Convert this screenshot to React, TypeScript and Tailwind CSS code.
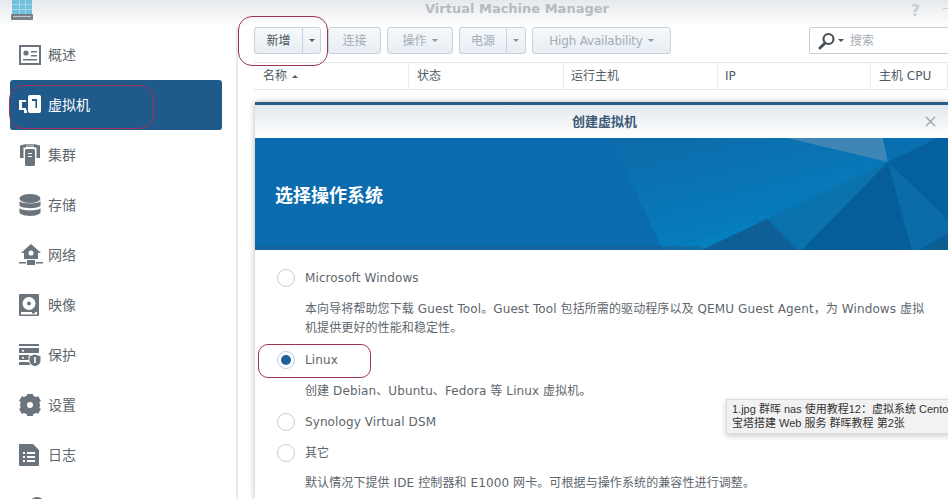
import { X } from "lucide-react";

const font = "font-['DejaVu_Sans','Noto_Sans_CJK_SC',sans-serif]";

const IconProfile = () => (
  <svg width="22" height="20" viewBox="0 0 22 20" fill="none">
    <rect x="1" y="1" width="20" height="18" stroke="#6b747d" strokeWidth="2" />
    <circle cx="7" cy="8" r="2.600" fill="#6b747d" />
    <path d="M12 6h6v1.600h-6zM12 10h6v1.600h-6zM4 14h14v1.600H4z" fill="#6b747d" />
  </svg>
);

const IconVm = () => (
  <svg width="22" height="20" viewBox="0 0 22 20" fill="none">
    <path d="M0 5h7v2H3v6h4v2H0z" fill="#fff" />
    <rect x="5" y="15" width="3" height="3" fill="#fff" />
    <rect x="9" y="0" width="13" height="18" rx="2" fill="#fff" />
    <path d="M13 4h5v9h-1.600V6H13z" fill="#1f5a8b" />
  </svg>
);

const IconCluster = () => (
  <svg width="22" height="22" viewBox="0 0 22 22" fill="none">
    <path d="M1 1.500L7 0v3.500H4.500V14H1zM21 1.500L15 0v3.500h2.500V14H21z" fill="#6b747d" />
    <path d="M7 0h8v3H7z" fill="#9aa1a7" />
    <rect x="6" y="5" width="10" height="17" rx="1.500" fill="#6b747d" />
    <path d="M9 9h4v1H9zM9 12h4v1H9z" fill="#fff" />
  </svg>
);

const IconStorage = () => (
  <svg width="22" height="23" viewBox="0 0 22 23" fill="#6b747d">
    <ellipse cx="11" cy="4.500" rx="10.500" ry="4.500" />
    <path d="M.5 7c1.500 3.200 19.500 3.200 21 0v4.500c-1.500 3.500-19.500 3.500-21 0zM.5 14c1.500 3.200 19.500 3.200 21 0v4.500c-1.500 4.500-19.500 4.500-21 0z" />
  </svg>
);

const IconNetwork = () => (
  <svg width="24" height="22" viewBox="0 0 24 22" fill="#6b747d">
    <path d="M12 0l10 9h-3v6H5V9H2z" />
    <circle cx="12" cy="9" r="2.500" fill="#fff" />
    <rect x="8" y="16" width="8" height="5" />
    <path d="M0 18h7v1.500H0zM17 18h7v1.500h-7z" />
  </svg>
);

const IconImage = () => (
  <svg width="20" height="22" viewBox="0 0 20 22">
    <rect width="20" height="22" rx="1" fill="#6b747d" />
    <circle cx="10" cy="9.500" r="6.500" fill="#fff" />
    <circle cx="10" cy="9.500" r="2" fill="#6b747d" />
    <rect x="2" y="18" width="16" height="2.500" fill="#fff" />
    <rect x="13" y="18" width="3" height="1.500" fill="#6b747d" />
  </svg>
);

const IconProtect = () => (
  <svg width="22" height="22" viewBox="0 0 22 22" fill="#6b747d">
    <path d="M0 0h20v2H0zM0 4h20v5H0zM0 11h11v5H0zM0 18h11v3H0z" />
    <path d="M3 6h2v1.500H3zM3 13h2v1.500H3z" fill="#fff" />
    <path d="M16 10l6 2v5c0 3-3 4.500-6 6-3-1.500-6-3-6-6v-5z" stroke="#fff" strokeWidth="1" />
    <path d="M15.200 13h1.600v6h-1.600z" fill="#fff" />
  </svg>
);

const IconGear = () => (
  <svg width="22" height="22" viewBox="0 0 22 22" fill="none">
    <circle cx="11" cy="11" r="6.500" stroke="#6b747d" strokeWidth="7" />
    <path d="M8 0h6v4H8zM8 18h6v4H8zM0 7l3-5 3.500 2-3 5zM22 7l-3-5-3.500 2 3 5zM0 15l3 5 3.500-2-3-5zM22 15l-3 5-3.500-2 3-5z" fill="#6b747d" />
  </svg>
);

const IconLog = () => (
  <svg width="20" height="22" viewBox="0 0 20 22">
    <path d="M0 1a1 1 0 011-1h13l6 6v15a1 1 0 01-1 1H1a1 1 0 01-1-1z" fill="#6b747d" />
    <path d="M4 8h2v2H4zM8 8h8v2H8zM4 12h2v2H4zM8 12h8v2H8zM4 16h2v2H4zM8 16h8v2H8z" fill="#fff" />
  </svg>
);

const IconLogo = () => (
  <svg width="22" height="21" viewBox="0 0 22 21">
    <rect x="1" y="0" width="20" height="14" fill="#6fc0dc" />
    <path d="M1 4h20v1H1zM1 9h20v1H1zM8 0h1v14H8zM14 0h1v14h-1z" fill="#a4d8e8" />
    <rect y="14" width="22" height="6" rx="1" fill="#7a8288" />
    <rect x="2" y="16" width="18" height="1" fill="#c2c7ca" />
  </svg>
);

const navItems = [
  { label: "概述", icon: <IconProfile /> },
  { label: "虚拟机", icon: <IconVm />, active: true },
  { label: "集群", icon: <IconCluster /> },
  { label: "存储", icon: <IconStorage /> },
  { label: "网络", icon: <IconNetwork /> },
  { label: "映像", icon: <IconImage /> },
  { label: "保护", icon: <IconProtect /> },
  { label: "设置", icon: <IconGear /> },
  { label: "日志", icon: <IconLog /> },
];

const Caret = ({ className = "border-t-[#8a949c]" }: { className?: string }) => (
  <span className={`inline-block w-0 h-0 border-x-[3px] border-x-transparent border-t-[3px] ${className}`} />
);

const btn =
  "h-[27px] shrink-0 flex items-center justify-center rounded-[3px] border border-[#c6d2dc] bg-gradient-to-b from-[#f6f9fb] to-[#e6edf3] text-[12px]";

const Radio = ({ checked = false }: { checked?: boolean }) => (
  <span className={`w-[18px] h-[18px] rounded-full border bg-white flex items-center justify-center shrink-0 ${checked ? "border-[#b9cfe3]" : "border-[#c5cdd3]"}`}>
    {checked && <span className="w-[10px] h-[10px] rounded-full bg-[#1f5f9c]" />}
  </span>
);

const columns = [
  { label: "名称", w: "w-[155px]", pad: "pl-[9px]", sort: true },
  { label: "状态", w: "w-[155px]", pad: "pl-[8px]" },
  { label: "运行主机", w: "w-[154px]", pad: "pl-[7px]" },
  { label: "IP", w: "w-[153px]", pad: "pl-[7px]" },
  { label: "主机 CPU", w: "flex-1", pad: "pl-[8px]" },
];

const App = () => {
  return (
    <div className={`relative w-[948px] h-[499px] overflow-hidden bg-white flex flex-col ${font}`}>
      <div className="h-[27px] shrink-0 relative bg-gradient-to-b from-[#e6e9ec] to-white flex items-center justify-center pl-[86px]">
        <span className="absolute left-[11px] top-0"><IconLogo /></span>
        <span className="text-[13px] font-bold text-[#b5bbc0] -mt-[9px]">Virtual Machine Manager</span>
        <span className="absolute left-[911px] top-0 text-[15px] font-bold text-[#c9ced2]">?</span>
        <span className="absolute left-[943px] top-[8px] w-[5px] h-[1px] bg-[#c9ced2]" />
      </div>

      <div className="flex-1 flex min-h-0">
        <aside className="w-[238px] shrink-0 border-r-2 border-[#e8eaec] pl-[10px] pr-[14px] pt-[3px] flex flex-col">
          {navItems.map((item) => (
            <div
              key={item.label}
              className={`h-[50px] shrink-0 flex items-center rounded-[3px] ${
                item.active ? "bg-[#1f5a8b] text-white" : "text-[#5d666d]"
              }`}
            >
              <span className="w-[38px] pl-[9px] flex justify-start shrink-0">{item.icon}</span>
              <span className="text-[14px]">{item.label}</span>
            </div>
          ))}
          <div className="h-[50px] shrink-0 pl-[19px] pt-[17px]">
            <span className="block w-[16px] h-[16px] rounded-full border-[3px] border-[#6b747d]" />
          </div>
        </aside>

        <main className="flex-1 min-w-0 flex flex-col pl-[16px]">
          <div className="h-[35px] shrink-0 flex items-start gap-[6px] overflow-hidden">
            <div className="flex shrink-0">
              <div className={`${btn} w-[48px] rounded-r-none border-r-0 text-[#4d565d]`}>新增</div>
              <div className={`${btn} w-[19px] rounded-l-none`}><Caret className="border-t-[#4d565d]" /></div>
            </div>
            <div className={`${btn} w-[53px] ml-[1px] text-[#a3adb5]`}>连接</div>
            <div className={`${btn} w-[66px] gap-[5px] text-[#a3adb5]`}>操作 <Caret /></div>
            <div className="flex shrink-0">
              <div className={`${btn} w-[47px] rounded-r-none border-r-0 text-[#a3adb5]`}>电源</div>
              <div className={`${btn} w-[20px] rounded-l-none`}><Caret /></div>
            </div>
            <div className={`${btn} w-[139px] gap-[5px] text-[#a3adb5] tracking-[-0.2px]`}>High Availability <Caret /></div>
            <div className="ml-[132px] w-[150px] h-[27px] shrink-0 border border-[#c6cdd3] bg-white flex items-center pl-[8px] rounded-[2px]">
              <svg width="18" height="18" viewBox="0 0 18 18" fill="none" className="shrink-0">
                <circle cx="10.500" cy="7" r="5" stroke="#4a5157" strokeWidth="2.200" />
                <path d="M7 11l-5 5" stroke="#4a5157" strokeWidth="3" strokeLinecap="round" />
              </svg>
              <span className="ml-[2px] mr-[6px] flex"><Caret className="border-t-[#4a5157]" /></span>
              <span className="text-[12px] text-[#a3adb5]">搜索</span>
            </div>
          </div>

          <div className="h-[28px] shrink-0 flex border-y border-[#e3e7ea]">
            {columns.map((c) => (
              <div key={c.label} className={`${c.w} ${c.pad} shrink-0 border-r border-[#e8ebee] flex items-center gap-[5px] text-[12px] text-[#4e5a64]`}>
                {c.label}
                {c.sort && <span className="w-0 h-0 border-x-[3px] border-x-transparent border-b-[3px] border-b-[#4e5a64]" />}
              </div>
            ))}
          </div>

          <section className="mt-[12px] ml-[1px] flex-1 min-h-0 border-t-[3px] border-[#2a5d8a] shadow-[0_0_6px_rgba(0,0,0,0.3)] flex flex-col">
            <div className="h-[33px] shrink-0 relative bg-gradient-to-b from-[#e2e8ef] to-white flex items-center justify-center pl-[6px]">
              <span className="text-[13px] font-bold text-[#3c5a76]">创建虚拟机</span>
              <X className="absolute right-[9px] top-[8px] w-[17px] h-[17px] text-[#a0a7ad]" strokeWidth={2} />
            </div>

            <div className="h-[112px] shrink-0 relative bg-[#0a6cae] flex items-center pl-[20px] pt-[3px] overflow-hidden">
              <svg className="absolute inset-0" width="693" height="112" viewBox="0 0 693 112">
                <defs>
                  <linearGradient id="face" x1="0" y1="0" x2="0.6" y2="1">
                    <stop offset="0" stopColor="#0e6aa8" />
                    <stop offset="1" stopColor="#0480c2" />
                  </linearGradient>
                </defs>
                <rect width="693" height="112" fill="#0a6cae" />
                <polygon points="355,0 532,0 633,24 512,81 408,112" fill="url(#face)" />
                <polygon points="408,112 512,81 447,112" fill="#0580bf" />
                <polygon points="532,0 628,0 633,24" fill="#3e86b6" />
                <polygon points="628,0 683,0 633,24" fill="#0a6fb0" />
                <polygon points="683,0 693,0 693,82 633,24" fill="#05609f" />
                <polygon points="633,24 512,81 547,112" fill="#0a72ad" />
                <polygon points="633,24 547,112 657,112" fill="#055e9a" />
                <polygon points="633,24 693,82 693,95 665,112 657,112" fill="#0a6ba8" />
                <polygon points="665,112 693,95 693,112" fill="#0c5d92" />
                <polygon points="512,81 447,112 542,112" fill="#0e5f96" />
                <rect y="108" width="447" height="4" fill="#1e5f94" opacity="0.6" />
              </svg>
              <h1 className="relative text-[18px] font-bold text-white">选择操作系统</h1>
            </div>

            <div className="flex-1 min-h-0 pl-[22px] pt-[18px] text-[12px] text-[#5d666d] leading-[19px] tracking-[0.1px] overflow-hidden">
              <label className="flex items-center gap-[10px] h-[20px]"><Radio /> Microsoft Windows</label>
              <p className="pl-[28px] mt-[12px] whitespace-nowrap">
                本向导将帮助您下载 Guest Tool。Guest Tool 包括所需的驱动程序以及 QEMU Guest Agent，为 Windows 虚拟<br />
                机提供更好的性能和稳定性。
              </p>
              <label className="flex items-center gap-[10px] h-[20px] mt-[12px]"><Radio checked /> Linux</label>
              <p className="pl-[28px] mt-[12px]">创建 Debian、Ubuntu、Fedora 等 Linux 虚拟机。</p>
              <label className="flex items-center gap-[10px] h-[20px] mt-[11px]"><Radio /> Synology Virtual DSM</label>
              <label className="flex items-center gap-[10px] h-[20px] mt-[11px]"><Radio /> 其它</label>
              <p className="pl-[28px] mt-[11px] whitespace-nowrap">默认情况下提供 IDE 控制器和 E1000 网卡。可根据与操作系统的兼容性进行调整。</p>
            </div>
          </section>
        </main>
      </div>

      {/* hand-drawn red marks over the screenshot */}
      <span className="absolute left-[238px] top-[16px] w-[90px] h-[50px] rounded-[14px] border border-[#a0344f]" />
      <span className="absolute left-[9px] top-[85px] w-[145px] h-[44px] rounded-[14px] border border-[#a0345f]" />
      <span className="absolute left-[258px] top-[344px] w-[113px] h-[34px] rounded-[10px] border border-[#a0344f]" />

      <div className="absolute left-[726px] top-[399px] w-[240px] h-[35px] bg-[#f2f2f2] border border-[#dcdcdc] shadow-[0_2px_6px_rgba(0,0,0,0.2)] px-[5px] pt-[2px] text-[11px] leading-[14px] text-[#333] font-['Liberation_Sans','Noto_Sans_CJK_SC',sans-serif] whitespace-nowrap overflow-hidden">
        <div>1.jpg 群晖 nas 使用教程12：虚拟系统 Centos7</div>
        <div>宝塔搭建 Web 服务 群晖教程 第2张</div>
      </div>
    </div>
  );
};

export default App;
